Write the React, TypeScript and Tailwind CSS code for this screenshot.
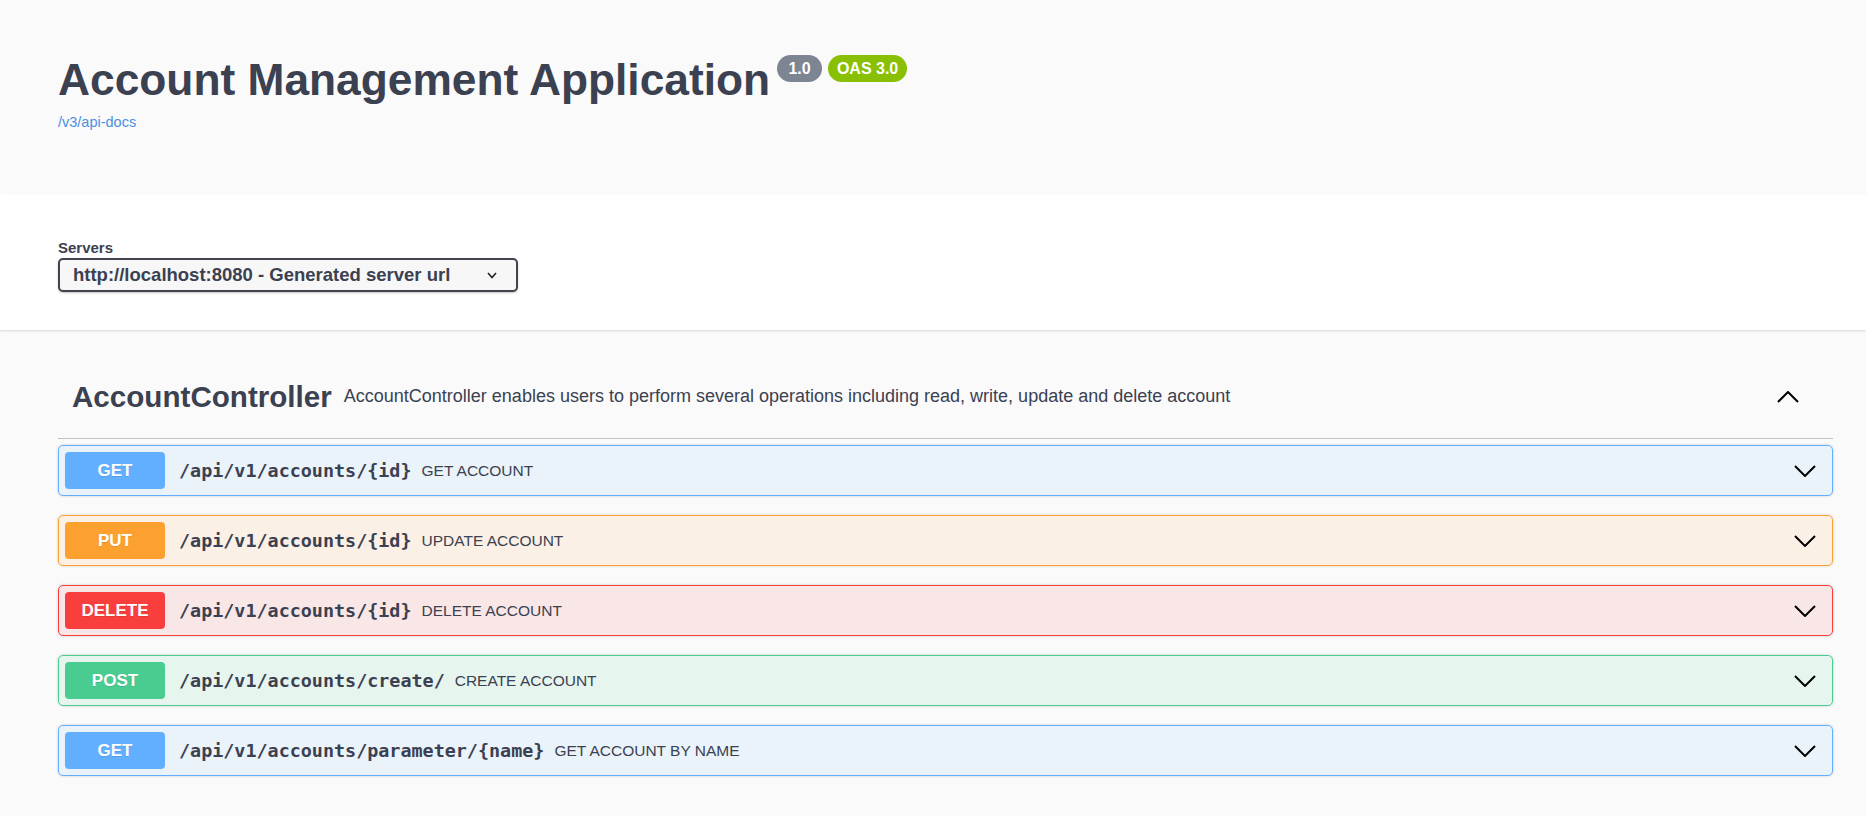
import React from "react"

const ops = [
  { method: "GET", path: "/api/v1/accounts/{id}", summary: "GET ACCOUNT" },
  { method: "PUT", path: "/api/v1/accounts/{id}", summary: "UPDATE ACCOUNT" },
  { method: "DELETE", path: "/api/v1/accounts/{id}", summary: "DELETE ACCOUNT" },
  { method: "POST", path: "/api/v1/accounts/create/", summary: "CREATE ACCOUNT" },
  { method: "GET", path: "/api/v1/accounts/parameter/{name}", summary: "GET ACCOUNT BY NAME" },
]

const styles: Record<string, { block: string; badge: string }> = {
  GET: { block: "border-[#61affe] bg-[#61affe]/10", badge: "bg-[#61affe]" },
  PUT: { block: "border-[#fca130] bg-[#fca130]/10", badge: "bg-[#fca130]" },
  DELETE: { block: "border-[#f93e3e] bg-[#f93e3e]/10", badge: "bg-[#f93e3e]" },
  POST: { block: "border-[#49cc90] bg-[#49cc90]/10", badge: "bg-[#49cc90]" },
}

const Chevron = ({ up = false }: { up?: boolean }) => (
  <svg width="22" height="12" viewBox="0 0 22 12" fill="none">
    <polyline
      points={up ? "1,11 11,1 21,11" : "1,1 11,11 21,1"}
      stroke="#000"
      strokeWidth="2"
    />
  </svg>
)

const OpBlock = ({ method, path, summary }: { method: string; path: string; summary: string }) => {
  const s = styles[method]
  return (
    <div
      className={`flex items-center h-[51px] border rounded-[5px] shadow-[0_0_3px_rgba(0,0,0,0.19)] p-[6px] ${s.block}`}
    >
      <div
        className={`w-[100px] h-[37px] rounded-[4px] flex items-center justify-center text-white font-bold text-[17px] [text-shadow:0_1px_0_rgba(0,0,0,0.1)] ${s.badge}`}
      >
        {method}
      </div>
      <span className="pl-[14px] pr-[10px] font-['DejaVu_Sans_Mono',monospace] font-bold text-[18.4px] text-[#3b4151]">
        {path}
      </span>
      <span className="text-[15.5px] text-[#3b4151]">{summary}</span>
      <div className="ml-auto mr-[10px] flex items-center">
        <Chevron />
      </div>
    </div>
  )
}

export default function App() {
  return (
    <div className="min-h-screen bg-[#fafafa] text-[#3b4151] font-['Liberation_Sans',Arial,sans-serif]">
      <div className="h-[194px] pl-[58px] pr-[33px] pt-[58px]">
        <div className="flex items-start">
          <h1 className="text-[44.3px] leading-none font-bold">Account Management Application</h1>
          <div className="ml-[7px] -mt-[3px] flex gap-[6px]">
            <span className="w-[45px] h-[27px] rounded-full bg-[#7d8492] text-white font-bold text-[16px] flex items-center justify-center">
              1.0
            </span>
            <span className="w-[79px] h-[27px] rounded-full bg-[#89bf04] text-white font-bold text-[16px] flex items-center justify-center">
              OAS 3.0
            </span>
          </div>
        </div>
        <a href="#" className="mt-[13px] block w-fit text-[14.5px] leading-none text-[#4990e2]">
          /v3/api-docs
        </a>
      </div>

      <div className="bg-white shadow-[0_1px_2px_0_rgba(0,0,0,0.15)] pl-[58px] pr-[33px] pt-[46px] pb-[38px]">
        <div className="text-[15px] leading-none font-bold">Servers</div>
        <div className="mt-[3px] w-[460px] h-[34px] border-2 border-[#41444e] rounded-[5px] bg-[#f7f7f7] shadow-[0_1px_2px_0_rgba(0,0,0,0.25)] flex items-center pl-[13px]">
          <span className="text-[18.5px] font-bold">http://localhost:8080 - Generated server url</span>
          <svg className="ml-[37px]" width="10" height="7" viewBox="0 0 10 7" fill="none">
            <polyline points="1,1 5,5.5 9,1" stroke="#222" strokeWidth="1.6" />
          </svg>
        </div>
      </div>

      <div className="pl-[58px] pr-[33px] pt-[25px] pb-[38px]">
        <div className="h-[84px] flex items-center border-b border-[#3b4151]/30 pl-[14px] pr-[34px]">
          <h3 className="text-[29.6px] leading-none font-bold">AccountController</h3>
          <span className="ml-[12px] text-[18px]">
            AccountController enables users to perform several operations including read, write, update and delete
            account
          </span>
          <div className="ml-auto flex items-center">
            <Chevron up />
          </div>
        </div>
        <div className="mt-[6px] flex flex-col gap-[19px]">
          {ops.map((op, i) => (
            <OpBlock key={i} {...op} />
          ))}
        </div>
      </div>
    </div>
  )
}
